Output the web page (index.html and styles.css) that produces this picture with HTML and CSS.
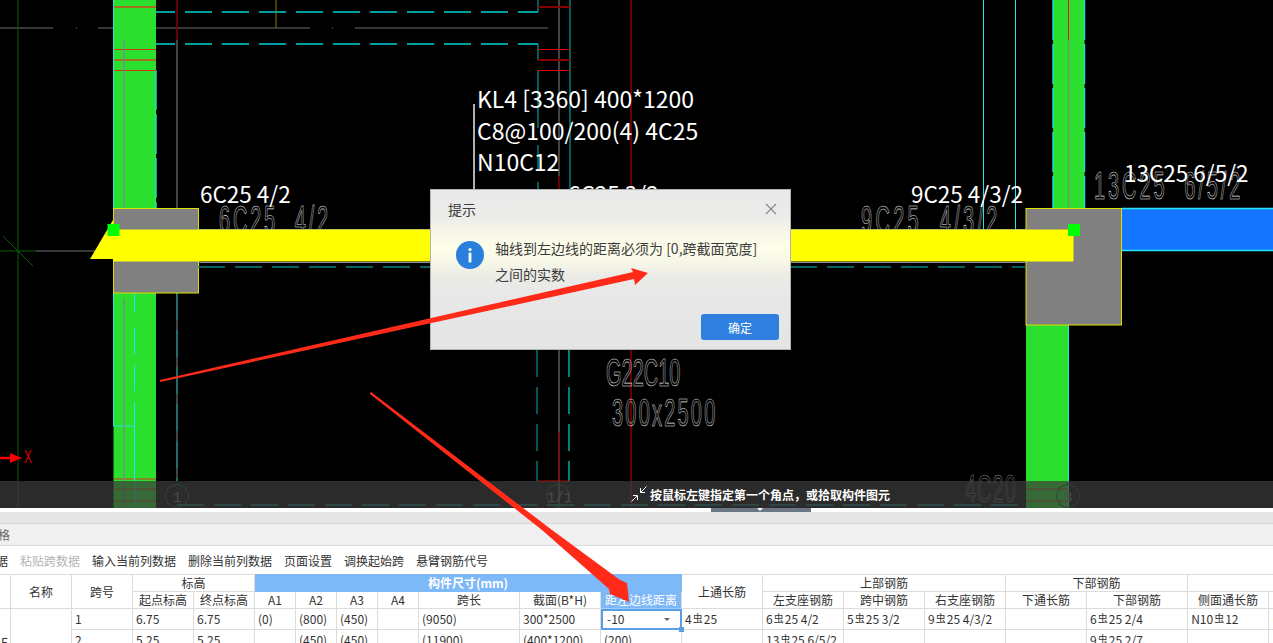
FILE: index.html
```html
<!DOCTYPE html>
<html lang="zh">
<head>
<meta charset="utf-8">
<title>提示</title>
<link rel="stylesheet" href="styles.css">
</head>
<body>
<div class="page">
  <section class="viewport">
    <svg class="cad" width="1273" height="508" viewBox="0 0 1273 508">
      <!-- dashed cyan beam edges, top -->
      <path class="cyan dash" d="M148 12H538M148 44H538"/>
      <path class="grayline" d="M0 28H53M98 28H310M355 28H548M76 28h1M332 28h1"/>
      <path class="dkgreen" d="M18 0V508M0 251H36M3 236L33 266"/>
      <path class="grayline" d="M36 251H113"/>
      <path class="olive" d="M276 0V28"/>
      <!-- inner verticals -->
      <path class="dkgray" d="M177 40V208M177 293V481M559 0V176M559 350V508"/>
      <path class="dkred2" d="M177 0V40M559 176V189M559 432V481"/>
      <path class="teal" d="M538 0V12M538 44V60M538 70V128M538 145V170M538 182V189M570 0V189"/>
      <path class="teal tdash" d="M177 293V481M537 350V481"/>
      <path class="cyan vdash" d="M569 350V481"/>
      <path class="red" d="M631 0V508"/>
      <path class="redh" d="M538 49.5H570M538 70.5H570M538 481H570"/>
      <path class="brownh" d="M538 7H570M538 60H570"/>
      <path class="cyanthin" d="M983.5 0V229M1015.5 0V229"/>
      <path class="tealdark tdash2" d="M177 505H1026"/>
      <!-- left column -->
      <rect class="green" x="113.5" y="0" width="42.5" height="508"/>
      <path class="cyanthin" d="M113.5 0V208M113.5 293V426H134.5"/>
      <path class="cyan edge" d="M156 70V208"/>
      <path class="brown" d="M114 7H156M114 60H156"/>
      <path class="redthin" d="M114 49.5H156M114 70.5H156M114 479H156M114 489H156M114 501H156"/>
      <path class="midgray" d="M124 41V208M124 298V508"/>
      <path class="cyanthin vdash2" d="M134.5 328V425"/>
      <path class="cyanthin" d="M134.5 293V312M134.5 425V508"/>
      <!-- right column -->
      <rect class="green" x="1053" y="0" width="31.5" height="208"/>
      <path class="cyan edge" d="M1053 0V208M1084.5 0V208"/>
      <path class="redbright" d="M1068.5 0V40"/>
      <path class="midgray" d="M1068.5 40V208"/>
      <rect class="green" x="1026" y="325" width="42.5" height="183"/>
      <path class="cyanthin" d="M1068.5 325V508"/>
      <path class="redthin" d="M1026 489H1068M1026 501H1068"/>
      <!-- blue beam -->
      <rect class="blue" x="1121.5" y="208" width="152" height="43"/>
      <path class="cyan solid" d="M1121.5 208.5H1273M1121.5 250.5H1273"/>
      <!-- thin CAD labels, hidden partly under the beam -->
      <text class="cadtext ls28" transform="translate(219 233) scale(1 1.9)" xml:space="preserve">6C25  4/2</text>
      <text class="cadtext ls33" transform="translate(861 233) scale(1 1.9)" xml:space="preserve">9C25  4/3/2</text>
      <text class="cadtext ls29" transform="translate(1094 199) scale(1 1.9)" xml:space="preserve">13C25  6/5/2</text>
      <text class="cadtext" transform="translate(606 386) scale(1 1.9)">G22C10</text>
      <text class="cadtext ls22" transform="translate(612 426) scale(1 1.9)">300x2500</text>
      <text class="cadtext dim ls10" transform="translate(965 502) scale(1 1.9)">4C20</text>
      <!-- columns and main beam -->
      <rect class="col" x="113.5" y="208.5" width="85" height="84.5"/>
      <rect class="col" x="1026" y="208.5" width="95.5" height="116.5"/>
      <path class="beamedge" d="M198 229.5H1026M198 262.5H1026"/>
      <path class="tealdark tdash2" d="M198 267H1026"/>
      <polygon class="yellow" points="113,220 90,259 113,259"/>
      <rect class="yellow" x="113" y="229.5" width="960.5" height="32"/>
      <rect class="handle" x="107.5" y="224" width="12" height="12"/>
      <rect class="handle" x="1068" y="224" width="12" height="12"/>
      <!-- labels -->
      <path class="leader" d="M474 104V190"/>
      <text class="label big" x="477" y="108">KL4 [3360] 400*1200</text>
      <text class="label big" x="477" y="140">C8@100/200(4) 4C25</text>
      <text class="label big" x="477" y="171">N10C12</text>
      <text class="label" x="200" y="203">6C25 4/2</text>
      <text class="label" x="568" y="203">6C25 3/2</text>
      <text class="label" x="911" y="203">9C25 4/3/2</text>
      <text class="label" x="1124" y="182">13C25 6/5/2</text>
      <!-- axis marker -->
      <path class="axis" d="M0 458H12"/>
      <polygon class="axisfill" points="10,453 22,458 10,463"/>
      <text class="axistext" transform="translate(24 463) scale(1 1.5)">X</text>
      <!-- grid bubbles -->
      <polygon class="bubble" points="177,484 185,487 189,496 185,505 177,508 169,505 165,496 169,487"/>
      <polygon class="bubble" points="558,484 566,487 570,496 566,505 558,508 550,505 546,496 550,487"/>
      <polygon class="bubble" points="1068,484 1076,487 1080,496 1076,505 1068,508 1060,505 1056,496 1060,487"/>
      <text class="bubbletext" x="173" y="502">1</text>
      <text class="bubbletext" x="547" y="502">1/1</text>
      <text class="bubbletext" x="1064" y="502">3</text>
    </svg>

    <div class="status">
      <svg class="status-icon" width="16" height="16" viewBox="0 0 16 16">
        <path d="M0.5 15.5L6 10M2 9.5H6.5V14M15.5 0.5L10 6M9.5 2V6.5H14"/>
      </svg>
      <span>按鼠标左键指定第一个角点，或拾取构件图元</span>
    </div>

    <div class="dialog">
      <div class="dialog-head">
        <span>提示</span>
        <svg class="close" width="12" height="12" viewBox="0 0 12 12"><path d="M1 1L11 11M11 1L1 11"/></svg>
      </div>
      <div class="dialog-body">
        <svg class="info" width="28" height="28" viewBox="0 0 28 28">
          <circle cx="14" cy="14" r="14"/>
          <circle class="info-i" cx="14" cy="8.5" r="1.6"/>
          <rect class="info-i" x="12.6" y="11.5" width="2.8" height="10" rx="1.2"/>
        </svg>
        <p>轴线到左边线的距离必须为 [0,跨截面宽度]<br>之间的实数</p>
      </div>
      <div class="dialog-foot"><button class="ok">确定</button></div>
    </div>
  </section>

  <div class="grip"><span class="grip-handle"></span></div>
  <div class="splitter"></div>
  <div class="panel-title"><span>梁平法表格</span></div>
  <div class="toolbar">
    <span class="first">复制跨数据</span>
    <span class="disabled">粘贴跨数据</span>
    <span>输入当前列数据</span>
    <span>删除当前列数据</span>
    <span>页面设置</span>
    <span>调换起始跨</span>
    <span>悬臂钢筋代号</span>
  </div>

  <div class="table-wrap">
    <table>
      <colgroup>
        <col class="c11"><col class="c61"><col class="c61"><col class="c61"><col class="c61">
        <col class="c41"><col class="c41"><col class="c41"><col class="c41">
        <col class="c101"><col class="c81"><col class="c81"><col class="c81"><col class="c81">
        <col class="c81"><col class="c81"><col class="c81"><col class="c101"><col class="c81"><col class="c81">
      </colgroup>
      <thead>
        <tr class="r1">
          <th rowspan="2"></th><th rowspan="2">名称</th><th rowspan="2">跨号</th>
          <th colspan="2">标高</th>
          <th colspan="7" class="sel">构件尺寸(mm)</th>
          <th rowspan="2">上通长筋</th>
          <th colspan="3">上部钢筋</th>
          <th colspan="2">下部钢筋</th>
          <th colspan="2"></th>
        </tr>
        <tr class="r2">
          <th>起点标高</th><th>终点标高</th><th>A1</th><th>A2</th><th>A3</th><th>A4</th>
          <th>跨长</th><th>截面(B*H)</th><th class="sel2">距左边线距离</th>
          <th>左支座钢筋</th><th>跨中钢筋</th><th>右支座钢筋</th>
          <th>下通长筋</th><th>下部钢筋</th><th>侧面通长筋</th><th></th>
        </tr>
      </thead>
      <tbody>
        <tr class="r3">
          <td rowspan="2" class="edge-e">E</td><td rowspan="2"></td>
          <td>1</td><td>6.75</td><td>6.75</td><td>(0)</td><td>(800)</td><td>(450)</td><td></td>
          <td>(9050)</td><td>300*2500</td>
          <td class="editing"><span>-10</span><i class="caret"></i><i class="fill-handle"></i></td>
          <td>4<b>虫</b>25</td><td>6<b>虫</b>25 4/2</td><td>5<b>虫</b>25 3/2</td><td>9<b>虫</b>25 4/3/2</td>
          <td></td><td>6<b>虫</b>25 2/4</td><td>N10<b>虫</b>12</td><td class="warn">(</td>
        </tr>
        <tr class="r4">
          <td>2</td><td>5.25</td><td>5.25</td><td></td><td>(450)</td><td>(450)</td><td></td>
          <td>(11900)</td><td>(400*1200)</td><td>(200)</td>
          <td></td><td>13<b>虫</b>25 6/5/2</td><td></td><td></td>
          <td></td><td>9<b>虫</b>25 2/7</td><td></td><td></td>
        </tr>
      </tbody>
    </table>
  </div>

  <svg class="arrows" width="1273" height="643" viewBox="0 0 1273 643">
    <polygon points="160,380 633,272 631,268 648,273 635,285 634,279 160,382"/>
    <polygon points="370,393 371,392 552,530 620,580 627,583 629,602 610,594 609,589 542,530 370,394"/>
  </svg>
</div>
</body>
</html>
```
FILE: styles.css
```css
* { box-sizing: border-box; }
html, body { margin: 0; padding: 0; overflow: hidden; background: #fff; }
body { font-family: "Noto Sans CJK SC", "Noto Sans", sans-serif; font-size: 12px; color: #333; }
.page { position: relative; width: 1273px; height: 643px; overflow: hidden; }

/* drawing viewport */
.viewport { position: relative; height: 508px; background: #000; overflow: hidden; }
.cad { display: block; }
.cad path { fill: none; }
.cyan { stroke: #00d2d2; stroke-width: 1.4; }
.cyan.dash { stroke-dasharray: 27 10; }
.cyan.edge { stroke-dasharray: 40 4; stroke: #19e0e0; }
.cyan.solid { stroke: #25e8f0; stroke-width: 1.5; stroke-dasharray: none; }
.cyan.vdash { stroke-dasharray: 27 10; stroke: #00b4b4; }
.cyanthin { stroke: #22e6e6; stroke-width: 1; }
.vdash2 { stroke-dasharray: 26 11; }
.grayline { stroke: #6e6e6e; stroke-width: 1; }
.dkgreen { stroke: #0b5c0b; stroke-width: 1; }
.olive { stroke: #8c7c12; stroke-width: 1; }
.dkgray { stroke: #585858; stroke-width: 1.5; }
.dkred2 { stroke: #8a0000; stroke-width: 1.5; }
.teal { stroke: #0a9a9a; stroke-width: 1.2; }
.tdash { stroke-dasharray: 27 10; stroke: #0a8a8a; }
.tealdark { stroke: #0b8282; stroke-width: 1.4; }
.tdash2 { stroke-dasharray: 27 10; }
.red { stroke: #c80000; stroke-width: 1; }
.redh { stroke: #d60000; stroke-width: 1; }
.brownh { stroke: #820000; stroke-width: 2; }
.brown { stroke: #a0701e; stroke-width: 2; }
.redthin { stroke: #d8301a; stroke-width: 1; }
.redbright { stroke: #ff1010; stroke-width: 1; }
.midgray { stroke: #7c8a7c; stroke-width: 1.3; }
.green { fill: #2bdf2e; }
.blue { fill: #1476ff; }
.col { fill: #808080; stroke: #e0e000; stroke-width: 1; }
.yellow { fill: #ffff00; }
.beamedge { stroke: #7f8fa6; stroke-width: 1; }
.handle { fill: #00ff00; }
.leader { stroke: #dddddd; stroke-width: 1.6; }
.label { font-family: "Noto Sans CJK SC", sans-serif; font-size: 22.5px; fill: #fff; }
.label.big { font-size: 23px; }
.cadtext { font-family: "Liberation Sans", sans-serif; font-size: 20px; fill: none; stroke: #e4e4e4; stroke-width: 0.5; vector-effect: non-scaling-stroke; white-space: pre; }
.cadtext.dim { stroke: #999; }
.ls10 { letter-spacing: 1px; }
.ls22 { letter-spacing: 2.2px; }
.ls28 { letter-spacing: 2.8px; }
.ls29 { letter-spacing: 2.9px; }
.ls33 { letter-spacing: 3.3px; }
.axis { stroke: #ff0000; stroke-width: 2.4; }
.axisfill { fill: #ff0000; }
.axistext { font-family: "Liberation Sans", sans-serif; font-size: 12px; fill: #d00000; }
.bubble { fill: none; stroke: #0e5a0e; stroke-width: 1; }
.bubbletext { font-family: "Liberation Mono", monospace; font-size: 14px; fill: #777; }

/* status strip */
.status { position: absolute; left: 0; right: 0; top: 481px; height: 27px; background: rgba(60, 60, 60, .72); display: flex; align-items: center; padding-left: 631px; gap: 3px; color: #fff; font-weight: 700; font-size: 12px; }
.status-icon { flex: none; margin-top: -1px; }
.status-icon path { fill: none; stroke: #fff; stroke-width: 1; }

/* dialog */
.dialog { position: absolute; left: 430px; top: 189px; width: 361px; height: 161px; border: 1px solid #b4b4b4; background: linear-gradient(to bottom, #e9e9e9 0%, #ebebe9 16%, #f8f8ea 28%, #fdfde9 36%, #f8f8e8 44%, #ebebe6 54%, #e8e8e8 65%, #e4e4e4 100%); display: flex; flex-direction: column; color: #3c3c3c; }
.dialog-head { display: flex; justify-content: space-between; align-items: center; height: 37px; padding: 0 13px 0 17px; font-size: 14px; }
.close path { fill: none; stroke: #8a8a8a; stroke-width: 1.2; }
.dialog-body { display: flex; gap: 11px; padding: 12px 0 0 25px; flex: 1; align-items: flex-start; }
.info { flex: none; margin-top: 2px; }
.info circle { fill: #2a7fdb; }
.info .info-i { fill: #fff; }
.dialog-body p { margin: -4px 0 0; font-size: 14px; line-height: 26px; white-space: nowrap; }
.dialog-foot { display: flex; justify-content: flex-end; padding: 0 11px 9px 0; }
.ok { width: 78px; height: 26px; border: 0; border-radius: 3px; background: #2e7fe0; color: #fff; font: 12px "Noto Sans CJK SC", sans-serif; padding: 0; }

/* grip + panels */
.grip { height: 4px; display: flex; justify-content: center; background: #fff; padding-left: 249px; }
.grip-handle { width: 100px; height: 4px; background: #6b7785; position: relative; }
.grip-handle::after { content: ""; position: absolute; left: 46px; top: 0; border: 3px solid transparent; border-top-color: #fff; border-bottom: 0; }
.splitter { height: 12px; background: #e6e6e6; border-bottom: 1px solid #d6d6d6; }
.panel-title { height: 22px; background: #f0f0f0; border-bottom: 1px solid #dcdcdc; display: flex; align-items: center; overflow: hidden; color: #666; font-size: 12px; }
.panel-title span { margin-left: -50px; white-space: nowrap; }
.toolbar { height: 28px; display: flex; align-items: center; gap: 12px; white-space: nowrap; color: #333; background: #fff; }
.toolbar .first { margin-left: -52px; }
.toolbar .disabled { color: #b4b4b4; }

/* table */
.table-wrap { overflow: hidden; height: 69px; }
table { border-collapse: collapse; table-layout: fixed; width: 1350px; margin-left: -1px; border-top: 1px solid #dcdcdc; }
col.c11 { width: 11px; } col.c41 { width: 41px; } col.c61 { width: 61px; } col.c81 { width: 81px; } col.c101 { width: 101px; }
th, td { border: 1px solid #dcdcdc; padding: 0; white-space: nowrap; overflow: hidden; font-weight: 400; font-size: 12px; color: #333; line-height: 16px; }
th { text-align: center; }
td { text-align: left; padding-left: 3px; }
tr.r1 th { height: 17px; }
tr.r2 th { height: 16px; }
tr.r3 td { height: 21px; }
tr.r4 td { height: 21px; }
th.sel { background: #7db8f8; color: #fff; font-weight: 700; border-color: #7db8f8; }
th.sel2 { background: #7db8f8; color: #fff; border-color: #a0ccf8; }
td b { font-weight: 400; font-size: 10px; position: relative; top: -2px; margin: 0 1px; }
td.edge-e { padding: 0 0 0 1px; vertical-align: bottom; overflow: hidden; }
td.editing { position: relative; overflow: visible; outline: 2px solid #5a9fe6; outline-offset: -2px; padding-left: 6px; }
.caret { position: absolute; right: 11px; top: 9px; border: 3px solid transparent; border-top-color: #666; border-bottom: 0; }
.fill-handle { position: absolute; right: -3px; bottom: -3px; width: 5px; height: 5px; background: #5a9fe6; }
td.warn { color: #e0a030; }

/* overlay annotation */
.arrows { position: absolute; left: 0; top: 0; pointer-events: none; }
.arrows polygon { fill: #ff2a18; }
```
